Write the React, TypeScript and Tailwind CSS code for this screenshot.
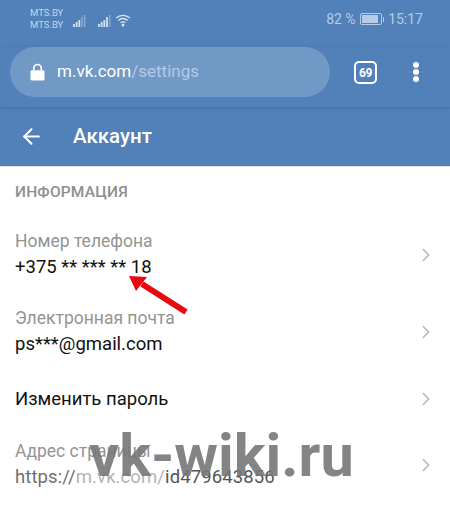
import { ReactNode } from 'react';
import { ChevronRight, ArrowLeft } from 'lucide-react';

function Signal({ strong }: { strong: number }) {
  const heights = [3, 5, 7, 10, 12];
  return (
    <svg width="13" height="12" viewBox="0 0 13 12">
      {heights.map((h, i) => (
        <rect key={h} x={i * 2.7} y={12 - h} width="1.8" height={h} fill="#dbe6f3" opacity={i < strong ? 0.95 : 0.35} />
      ))}
    </svg>
  );
}

function Row({ label, value }: { label?: string; value: ReactNode }) {
  return (
    <div className="flex items-center justify-between pl-[15px] pr-[16px]">
      <div>
        {label && <div className="text-[17.5px] leading-[25px] text-[#949494]">{label}</div>}
        <div className="text-[18.5px] leading-[25px] pt-[1px] text-[#111111]">{value}</div>
      </div>
      <ChevronRight size={22} strokeWidth={1.6} className="text-[#b4b4b4] mr-[-3px]" />
    </div>
  );
}

export default function App() {
  return (
    <div className="relative w-[450px] h-[506px] overflow-hidden bg-white font-['Roboto',sans-serif]">
      <div className="bg-[#5181b8]">
        <div className="h-[47px] flex items-start justify-between pl-[30px] pr-[27px] pt-[7px]">
          <div className="flex items-center gap-[10px]">
            <div className="text-[9.5px] leading-[12px] text-[#c3d5ea]">
              <div>MTS.BY</div>
              <div>MTS.BY</div>
            </div>
            <div className="flex items-center gap-[12px] mt-[3px]">
              <Signal strong={3} />
              <div className="flex items-center gap-[4px]">
                <Signal strong={4} />
                <svg width="16" height="14" viewBox="0 0 17 14" fill="none" stroke="#dbe6f3" strokeWidth="1.4" className="mt-[-2px]">
                  <path d="M1 5 C5.5 1 11.5 1 16 5" />
                  <path d="M3.5 7.5 C6.5 5 10.5 5 13.5 7.5" />
                  <path d="M6 10 C7.5 8.8 9.5 8.8 11 10" />
                  <circle cx="8.5" cy="12.5" r="0.8" fill="#dbe6f3" />
                </svg>
              </div>
            </div>
          </div>
          <div className="flex items-center gap-[4px] text-[14px] leading-[24px] text-[#b5cbe6]">
            <span>82 %</span>
            <div className="flex items-center">
              <div className="w-[22px] h-[12px] border border-[#b5cbe6] rounded-[2px] p-[1px]">
                <div className="w-[16px] h-full bg-[#b5cbe6]" />
              </div>
              <div className="w-[1.5px] h-[5px] bg-[#b5cbe6] ml-[1px]" />
            </div>
            <span>15:17</span>
          </div>
        </div>
        <div className="h-[60px] flex items-start pl-[10px] shadow-[0_1px_3px_rgba(40,70,110,0.35)]">
          <div className="w-[320px] h-[50px] rounded-[25px] bg-[#7199c6] flex items-center pl-[20px] gap-[12px]">
            <svg width="15" height="20" viewBox="0 0 16 20" fill="white">
              <path d="M2 8h12a1.5 1.5 0 0 1 1.5 1.5v8A1.5 1.5 0 0 1 14 19H2a1.5 1.5 0 0 1-1.5-1.5v-8A1.5 1.5 0 0 1 2 8z" />
              <path d="M4 8V6a4 4 0 0 1 8 0v2" fill="none" stroke="white" strokeWidth="1.8" />
            </svg>
            <div className="text-[17px] text-white">
              m.vk.com<span className="text-[#b3cbe6]">/settings</span>
            </div>
          </div>
          <div className="ml-[24px] mt-[14px] w-[23px] h-[23px] border-2 border-white rounded-[5px] flex items-center justify-center text-[12px] font-bold tracking-[-0.5px] text-white">
            69
          </div>
          <div className="ml-[36px] mt-[15px] flex flex-col gap-[1px]">
            <div className="w-[6px] h-[6px] rounded-full bg-white" />
            <div className="w-[6px] h-[6px] rounded-full bg-white" />
            <div className="w-[6px] h-[6px] rounded-full bg-white" />
          </div>
        </div>
        <div className="h-[60px] flex items-center pl-[19px] gap-[29px] border-b border-[#dfe3e8]">
          <ArrowLeft size={25} strokeWidth={2} className="text-white" />
          <div className="text-[20.5px] font-medium text-white">Аккаунт</div>
        </div>
      </div>

      <div className="pl-[15px] pt-[15px] text-[15.5px] leading-[20px] font-medium text-[#8e8e8e] tracking-[0.2px]">ИНФОРМАЦИЯ</div>

      <div className="pt-[27px] flex flex-col">
        <Row label="Номер телефона" value="+375 ** *** ** 18" />
        <div className="h-[26px]" />
        <Row label="Электронная почта" value="ps***@gmail.com" />
        <div className="h-[29px]" />
        <Row value="Изменить пароль" />
        <div className="h-[27px]" />
        <Row
          label="Адрес страницы"
          value={
            <span className="tracking-[0.1px]">
              <span className="text-[#6f6f6f]">https://</span>
              <span className="text-[#b4b4b4]">m.vk.com/</span>
              <span className="text-[#555555]">id479643856</span>
            </span>
          }
        />
      </div>

      {/* red arrow */}
      <svg className="absolute left-[125px] top-[270px]" width="70" height="50" viewBox="0 0 70 50">
        <path d="M61 42 L17 14" stroke="#e8090f" strokeWidth="6" fill="none" />
        <path d="M4 6 L22 7 L11 21 Z" fill="#e8090f" />
      </svg>

      {/* watermark */}
      <div className="absolute left-[89px] top-[421px] text-[59.5px] leading-[70px] font-bold text-[#777777]/90">
        vk-wiki.ru
      </div>
    </div>
  );
}
